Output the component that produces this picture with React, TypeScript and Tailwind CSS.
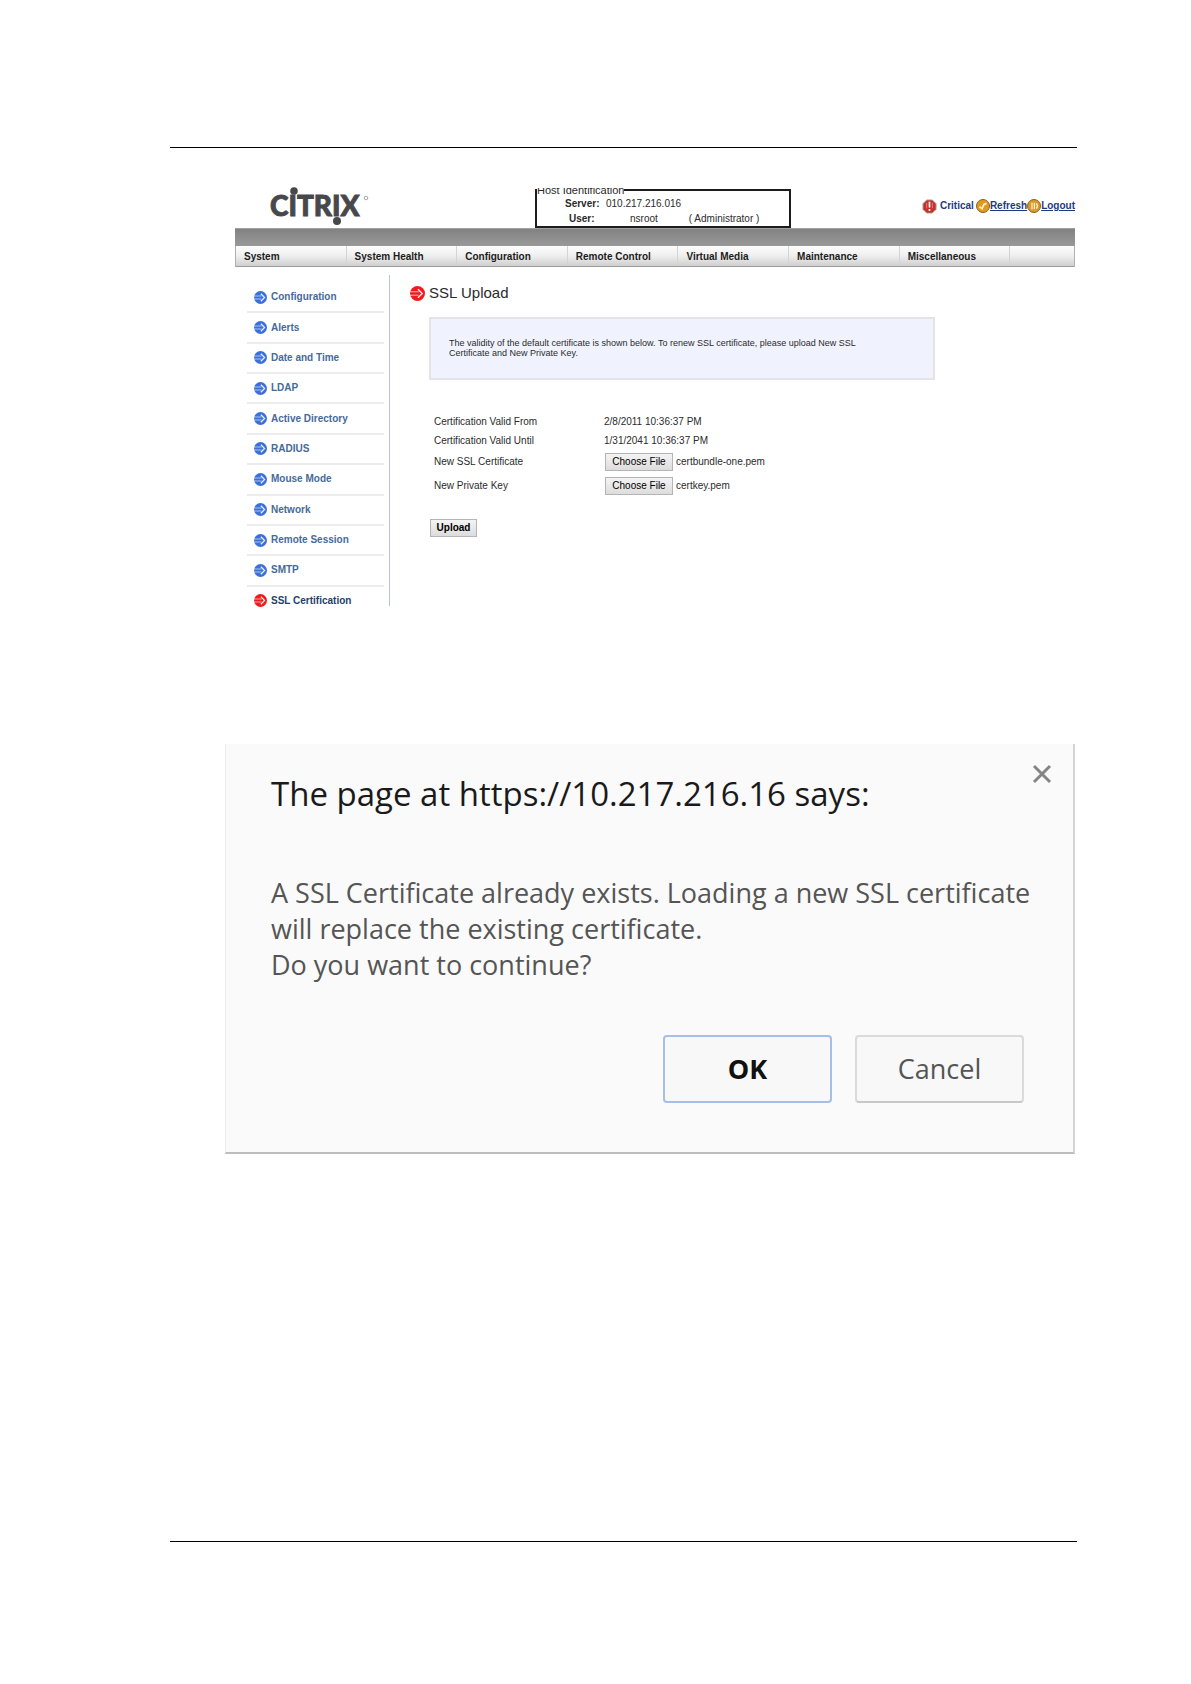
import React from 'react';

const menuItems = [
  'System',
  'System Health',
  'Configuration',
  'Remote Control',
  'Virtual Media',
  'Maintenance',
  'Miscellaneous',
];

const sideItems = [
  'Configuration',
  'Alerts',
  'Date and Time',
  'LDAP',
  'Active Directory',
  'RADIUS',
  'Mouse Mode',
  'Network',
  'Remote Session',
  'SMTP',
  'SSL Certification',
];

function ArrowBadge({ color, className }: { color: string; className: string }) {
  return (
    <svg viewBox="0 0 14 14" className={className} aria-hidden="true">
      <circle cx="7" cy="7" r="7" fill={color} />
      <path d="M0 5.4h8M0 8.6h8" stroke="#fff" strokeWidth="0.9" opacity="0.7" />
      <path d="M7.4 3 11.4 7l-4 4" fill="none" stroke="#fff" strokeWidth="1.3" opacity="0.9" />
    </svg>
  );
}

function Logo() {
  return (
    <svg width="102" height="40" viewBox="0 0 102 40" className="ml-9 overflow-visible" role="img" aria-label="Citrix">
      <text
        x="-1"
        y="28"
        fill="#47484b"
        stroke="#47484b"
        strokeWidth="0.9"
        fontSize="28"
        fontWeight="900"
        fontFamily="Lato, sans-serif"
      >
        CITRIX
      </text>
      <circle cx="23" cy="3" r="3.8" fill="#47484b" />
      <circle cx="66" cy="33" r="4" fill="#47484b" />
      <circle cx="95" cy="10" r="1.8" fill="none" stroke="#a5a5a5" strokeWidth="1" />
    </svg>
  );
}

function CriticalIcon() {
  return (
    <svg viewBox="0 0 16 16" className="mr-[3px] size-[15px]" aria-hidden="true">
      <path d="M5 1h6l4 4v6l-4 4H5l-4-4V5z" fill="#c5302c" stroke="#a9a0a0" strokeWidth="1" />
      <path d="M8 3v6M8 10.7v2.2" stroke="#fff" strokeWidth="1.8" />
      <path d="M5 4v6M11 4v6" stroke="#e79a95" strokeWidth="0.8" />
    </svg>
  );
}

function RefreshIcon() {
  return (
    <svg viewBox="0 0 14 14" className="size-[14px]" aria-hidden="true">
      <circle cx="7" cy="7" r="6.5" fill="#e39a1c" stroke="#8a6320" strokeWidth="1" />
      <path d="M3.4 7.6 6 9.6 8 5.4l2.6-1" fill="none" stroke="#fff3d8" strokeWidth="1.8" />
    </svg>
  );
}

function LogoutIcon() {
  return (
    <svg viewBox="0 0 14 14" className="size-[14px]" aria-hidden="true">
      <circle cx="7" cy="7" r="6.5" fill="#dc9a2a" stroke="#8a6320" strokeWidth="1" />
      <path d="M5 3.8v6.4M7.4 3.8v6.4M9.4 4.4c1.2 1.6 1.2 3.6 0 5.2" fill="none" stroke="#fff3d8" strokeWidth="1.2" />
    </svg>
  );
}

function FileRow({ id, label, file }: { id: string; label: string; file: string }) {
  return (
    <tr className="h-6">
      <td className="p-0">
        <label htmlFor={id}>{label}</label>
      </td>
      <td className="p-0">
        <div className="flex items-center gap-[3px] pl-px">
          <button
            id={id}
            type="button"
            className="h-[18px] w-[68px] border border-[#b4b4b4] bg-linear-to-b from-[#f4f4f4] to-[#dcdcdc] leading-4 text-black"
          >
            Choose File
          </button>
          <span>{file}</span>
        </div>
      </td>
    </tr>
  );
}

function Console() {
  return (
    <section className="ml-[65px] mr-[2px] font-['Liberation_Sans',Arial,sans-serif] text-[10px] leading-[12px] text-[#2b2b2b]">
      <header className="grid h-10 grid-cols-[300px_256px_1fr]">
        <Logo />
        <div className="h-10 overflow-hidden">
          <fieldset className="-mt-1.5 h-[46px] border-2 border-[#1c1c1c]">
            <legend className="text-[11px] leading-4">Host Identification</legend>
            <dl className="-mt-0.5 grid grid-cols-[69px_1fr] leading-[15px]">
              <dt className="pl-7 font-bold">Server:</dt>
              <dd>010.217.216.016</dd>
              <dt className="pl-8 font-bold">User:</dt>
              <dd className="flex gap-[31px] pl-6">
                <span>nsroot</span>
                <span>( Administrator )</span>
              </dd>
            </dl>
          </fieldset>
        </div>
        <div className="flex h-9 items-center justify-end font-bold text-[#1f3a7c]">
          <CriticalIcon />
          <span className="mr-[2px]">Critical</span>
          <a href="#refresh" className="flex items-center underline">
            <RefreshIcon />
            Refresh
          </a>
          <a href="#logout" className="flex items-center underline">
            <LogoutIcon />
            Logout
          </a>
        </div>
      </header>

      <div className="h-[18px] border-t border-[#a0a0a0] bg-linear-to-b from-[#828282] to-[#999999]" />
      <nav className="flex h-[21px] border border-t-0 border-[#b0b0b0] border-b-[#9c9c9c] bg-linear-to-b from-[#fdfdfd] via-[#eeeeee] to-[#cfcfcf]">
        {menuItems.map((item) => (
          <a
            key={item}
            href="#menu"
            className="w-[13.2%] border-r border-[#d4d4d4] pl-2 font-bold leading-[21px] text-[#1c1c1c]"
          >
            {item}
          </a>
        ))}
      </nav>

      <div className="mt-2 flex">
        <aside className="h-[331px] w-[155px] shrink-0 border-r border-[#b9bdf5] pl-3 pr-[5px] pt-2">
          <ul className="grid h-[334px] grid-rows-11">
            {sideItems.map((item, i) => {
              const active = i === sideItems.length - 1;
              return (
                <li
                  key={item}
                  className={active ? 'flex border-b-2 border-transparent' : 'flex border-b-2 border-[#ececec]'}
                >
                  <a
                    href="#section"
                    className={
                      active
                        ? 'flex flex-1 items-center gap-1 pl-[7px] font-bold text-[#1f3f6b]'
                        : 'flex flex-1 items-center gap-1 pl-[7px] font-bold text-[#466a99]'
                    }
                  >
                    <ArrowBadge color={active ? '#ee1c1c' : '#3a70d8'} className="size-[13px]" />
                    {item}
                  </a>
                </li>
              );
            })}
          </ul>
        </aside>

        <div className="flex-1 pl-5 pt-[9px]">
          <h1 className="flex items-center gap-1 text-[15px] leading-[18px]">
            <ArrowBadge color="#ee1c1c" className="size-[15px]" />
            SSL Upload
          </h1>
          <p className="ml-[19px] mt-[15px] h-[63px] max-w-[506px] border-2 border-[#e4e4e8] bg-[#f0f3fe] pl-[18px] pr-12 pt-[19px] text-[9px] leading-[10px]">
            The validity of the default certificate is shown below. To renew SSL certificate, please upload New SSL
            Certificate and New Private Key.
          </p>
          <table className="ml-6 mt-8">
            <tbody>
              <tr className="h-[19px]">
                <td className="w-[170px] p-0">Certification Valid From</td>
                <td className="p-0">2/8/2011 10:36:37 PM</td>
              </tr>
              <tr className="h-[19px]">
                <td className="p-0">Certification Valid Until</td>
                <td className="p-0">1/31/2041 10:36:37 PM</td>
              </tr>
              <FileRow id="certificate" label="New SSL Certificate" file="certbundle-one.pem" />
              <FileRow id="private-key" label="New Private Key" file="certkey.pem" />
            </tbody>
          </table>
          <button
            type="button"
            className="ml-5 mt-[21px] block h-[18px] w-[47px] border border-[#b4b4b4] bg-linear-to-b from-[#f4f4f4] to-[#dcdcdc] font-bold leading-4 text-black"
          >
            Upload
          </button>
        </div>
      </div>
    </section>
  );
}

function ConfirmDialog() {
  return (
    <section
      role="dialog"
      aria-labelledby="dialog-title"
      className="relative ml-[55px] mr-[2px] border-b-2 border-l border-r-2 border-l-[#ececec] border-r-[#d4d4d4] border-b-[#bdbdbd] bg-[#fafafa] pb-[49px] pl-[45px] pr-[49px] pt-[30px] font-['Open_Sans','Noto_Sans',sans-serif]"
    >
      <button type="button" aria-label="Close" className="absolute right-[21px] top-5">
        <svg width="20" height="20" viewBox="0 0 20 20" aria-hidden="true">
          <path d="m2 2 16 16M18 2 2 18" stroke="#858585" strokeWidth="3" />
        </svg>
      </button>
      <h2 id="dialog-title" className="text-[33px] leading-10 text-[#1a1a1a]">
        The page at https://10.217.216.16 says:
      </h2>
      <p className="-mr-6 mt-[61px] text-[27px] leading-9 text-[#555555]">
        A SSL Certificate already exists. Loading a new SSL certificate
        <br />
        will replace the existing certificate.
        <br />
        Do you want to continue?
      </p>
      <div className="mt-[52px] flex justify-end gap-[23px] text-[27px]">
        <button
          type="button"
          className="h-[68px] w-[169px] rounded border-2 border-[#a5bfe6] bg-[#f8f8f8] font-bold text-[#111111]"
        >
          OK
        </button>
        <button
          type="button"
          className="h-[68px] w-[169px] rounded border-2 border-[#dadada] border-b-[#c8c8c8] bg-[#f8f8f8] text-[#555555]"
        >
          Cancel
        </button>
      </div>
    </section>
  );
}

export default function App() {
  return (
    <main className="bg-white pb-[141px] pl-[170px] pr-[114px] pt-[147px]">
      <hr className="border-t border-black" />
      <div className="pt-10">
        <Console />
      </div>
      <div className="pb-[387px] pt-[138px]">
        <ConfirmDialog />
      </div>
      <hr className="border-t border-black" />
    </main>
  );
}
